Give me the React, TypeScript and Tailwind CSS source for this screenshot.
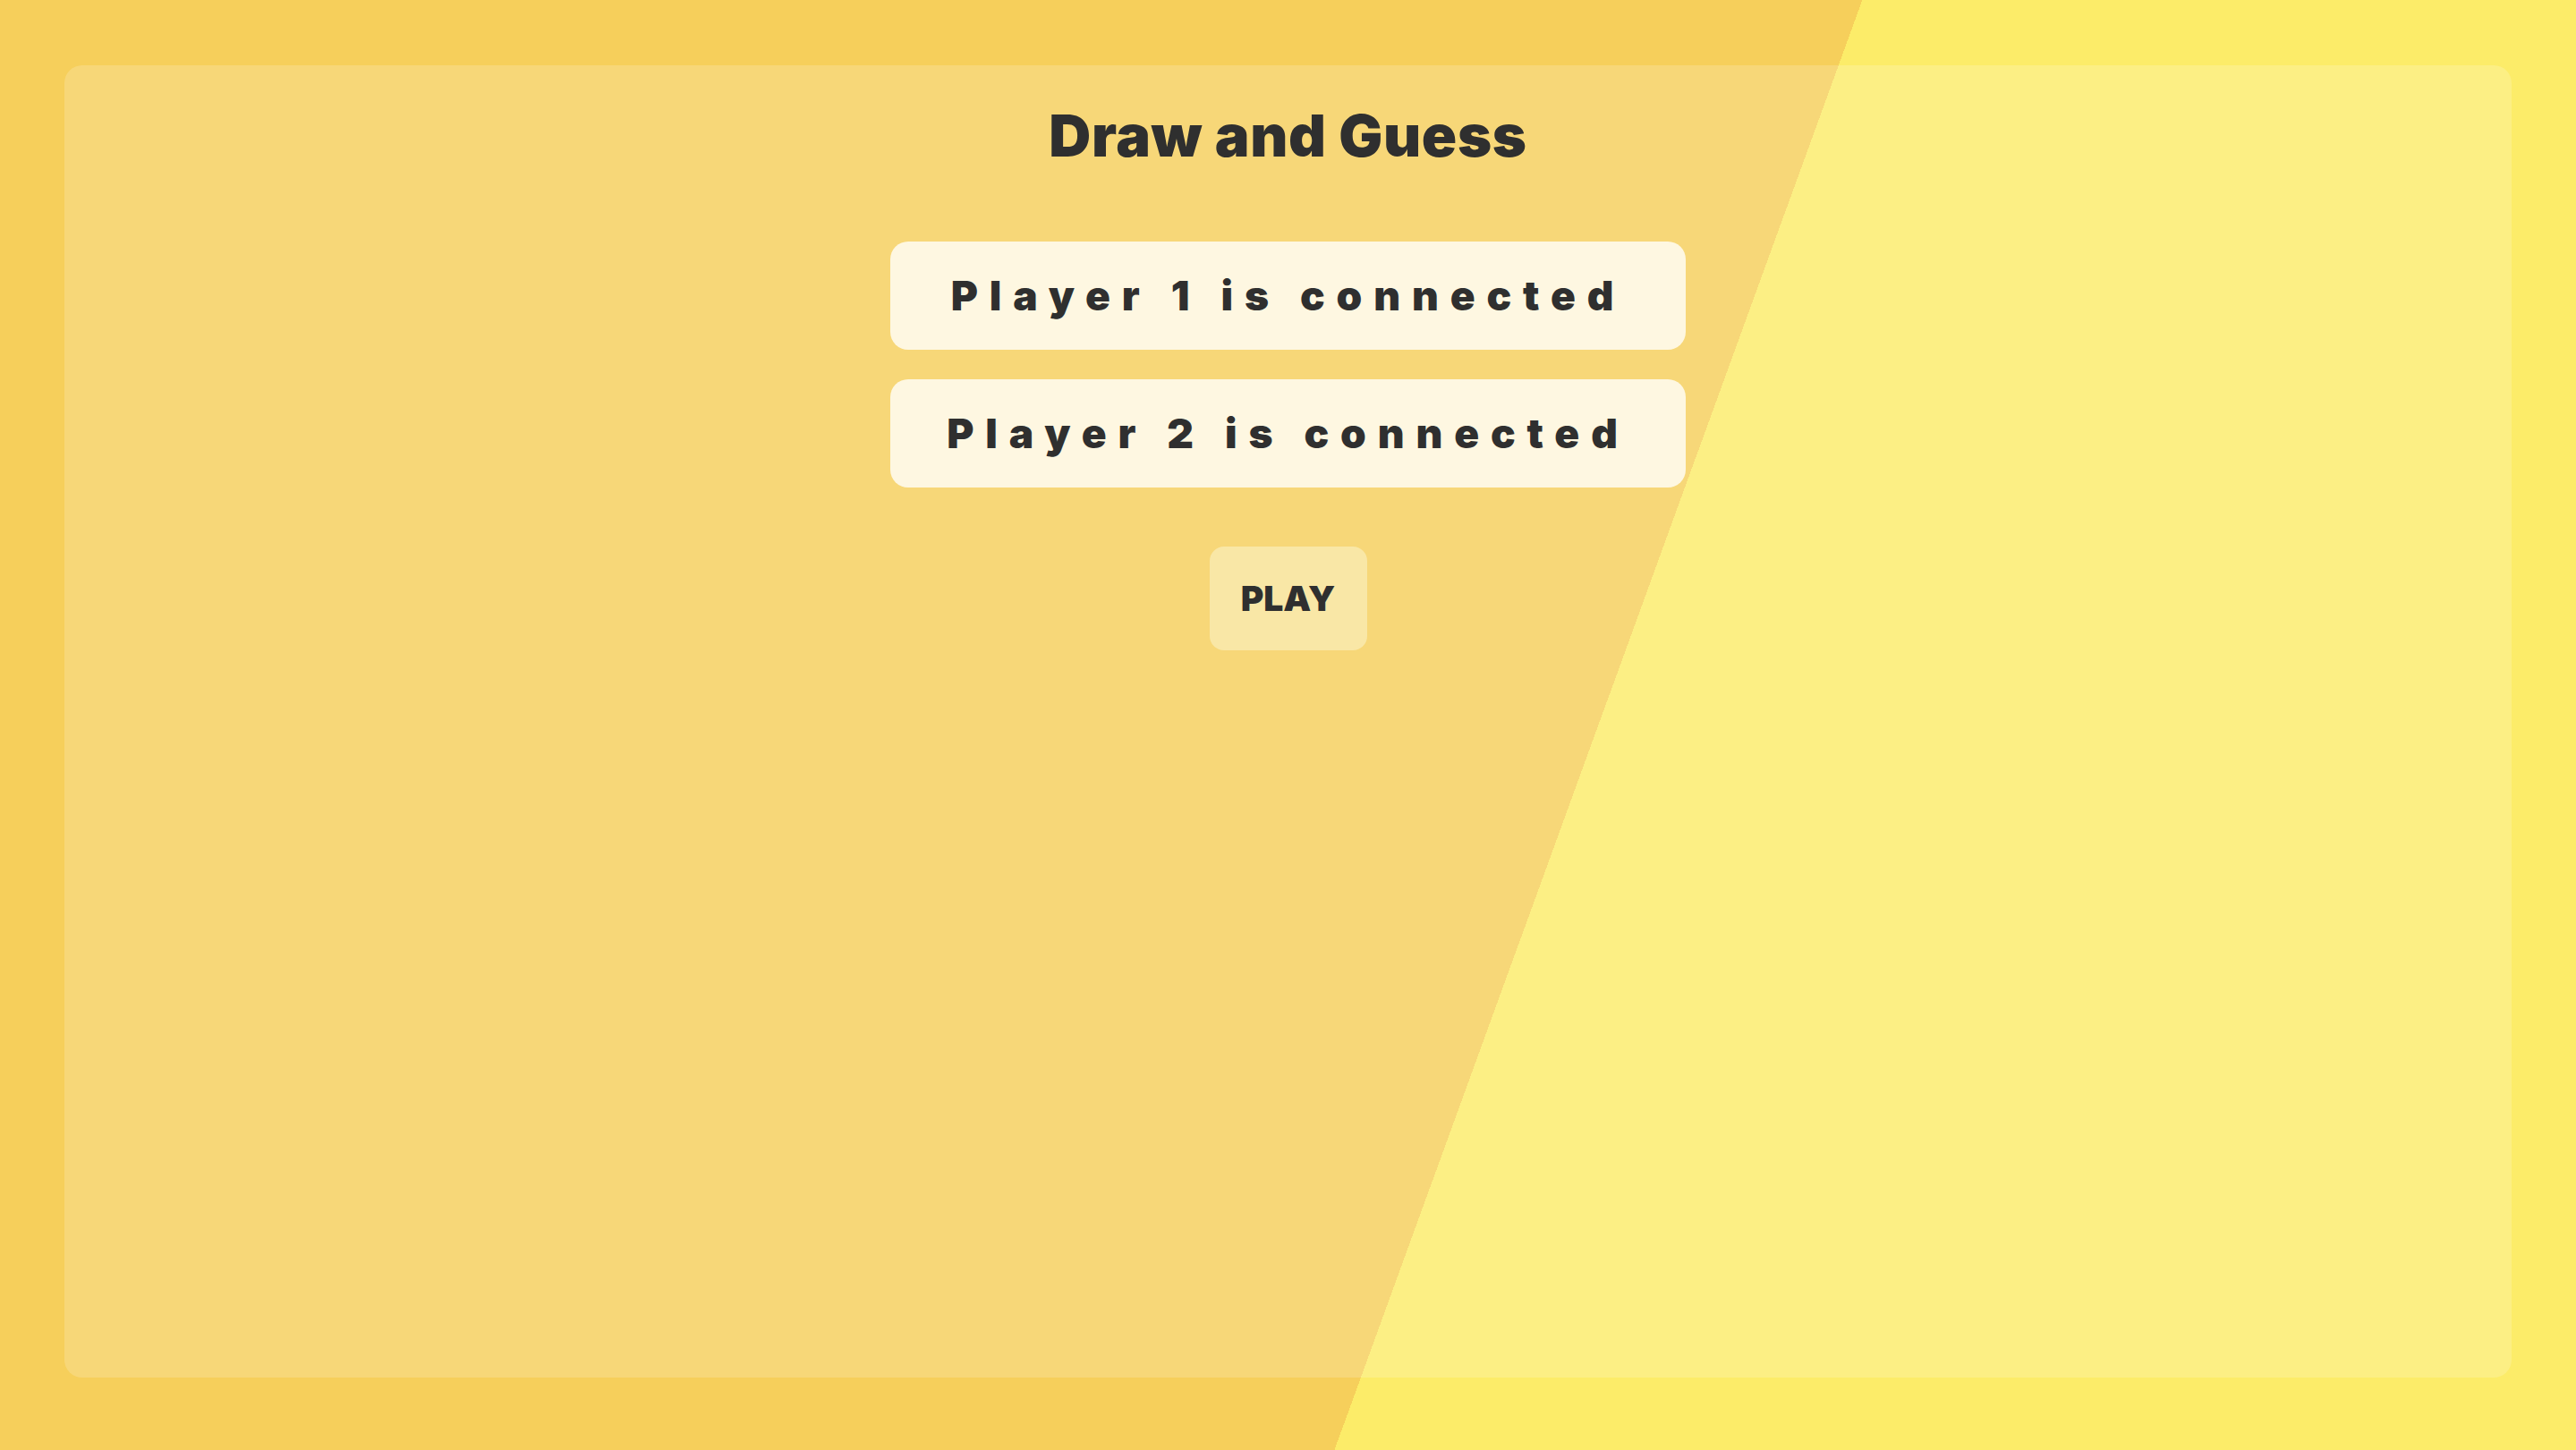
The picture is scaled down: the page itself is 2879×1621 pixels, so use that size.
import React from "react";

export default function App() {
  const font = { fontFamily: "Inter, Lato, 'DejaVu Sans', sans-serif" };
  return (
    <div
      className="w-full h-[1621px] bg-[linear-gradient(110deg,#f6cf5b_60%,#fcec69_60%)] pt-[73px] pb-[81px] px-[72px]"
      style={font}
    >
      <div className="h-full w-full rounded-[20px] bg-white/[0.18] flex flex-col items-center text-[#2f2f2f]">
        <h1 className="mt-[38px] text-[65px] leading-[82px] font-black tracking-[0.01em]">
          Draw and Guess
        </h1>
        <div className="mt-[77px] flex flex-col gap-[33px]">
          <div className="w-[889px] h-[121px] rounded-[20px] bg-[#fef7e1] flex items-center justify-center text-[46px] font-black tracking-[0.28em]">
            Player 1 is connected
          </div>
          <div className="w-[889px] h-[121px] rounded-[20px] bg-[#fef7e1] flex items-center justify-center text-[46px] font-black tracking-[0.28em]">
            Player 2 is connected
          </div>
        </div>
        <button className="mt-[66px] w-[176px] h-[116px] rounded-[16px] bg-[#f9e7a6] flex items-center justify-center text-[39px] font-black">
          PLAY
        </button>
      </div>
    </div>
  );
}
